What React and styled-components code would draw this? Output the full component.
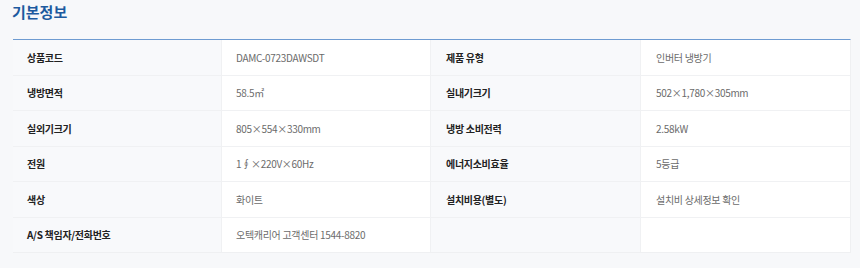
import React from 'react'
import styled, { createGlobalStyle } from 'styled-components'

const GlobalStyle = createGlobalStyle`
  body {
    margin: 0;
    background: #f7f8fa;
    font-family: "Noto Sans CJK KR", "Noto Sans", sans-serif;
  }
`

const Section = styled.section`
  padding: 0 10px 0 13px;
`

const Title = styled.h2`
  margin: 0 0 0 -1px;
  height: 39px;
  line-height: 24px;
  font-size: 15px;
  font-weight: 700;
  color: #1d5a9f;
  letter-spacing: 0;
`

const Table = styled.div`
  width: 837px;
  display: grid;
  grid-template-columns: 209px 209px 210px 209px;
  border-top: 1px solid #6e9bd1;
  border-bottom: 1px solid #eff0f2;
  border-right: 1px solid #eff0f2;
`

const Cell = styled.div`
  box-sizing: border-box;
  height: ${p => (p.$last ? '34.5px' : '35.5px')};
  display: flex;
  align-items: center;
  padding-left: ${p => (p.$right ? '15px' : '14px')};
  font-size: 10px;
  letter-spacing: -0.3px;
  white-space: nowrap;
  border-bottom: ${p => (p.$last ? 'none' : '1px solid #f0f1f3')};
  border-right: ${p => (p.$edge ? 'none' : '1px solid #f0f1f3')};
  background: ${p => (p.$head ? '#f8f9fb' : '#ffffff')};
  color: ${p => (p.$head ? '#222222' : '#6b6b6b')};
  font-weight: ${p => (p.$head ? 700 : 400)};
`

const rows = [
  ['상품코드', 'DAMC-0723DAWSDT', '제품 유형', '인버터 냉방기'],
  ['냉방면적', '58.5㎡', '실내기크기', '502×1,780×305mm'],
  ['실외기크기', '805×554×330mm', '냉방 소비전력', '2.58kW'],
  ['전원', '1∮×220V×60Hz', '에너지소비효율', '5등급'],
  ['색상', '화이트', '설치비용(별도)', '설치비 상세정보 확인'],
  ['A/S 책임자/전화번호', '오텍캐리어 고객센터 1544-8820', '', ''],
]

const App = () => {
  return (
    <>
      <GlobalStyle />
      <Section>
        <Title>기본정보</Title>
        <Table>
          {rows.map((r, i) => {
            const last = i === rows.length - 1
            return (
              <React.Fragment key={i}>
                <Cell $head $last={last}>{r[0]}</Cell>
                <Cell $last={last}>{r[1]}</Cell>
                <Cell $head $right $last={last}>{r[2]}</Cell>
                <Cell $right $edge $last={last}>{r[3]}</Cell>
              </React.Fragment>
            )
          })}
        </Table>
      </Section>
    </>
  )
}

export default App
